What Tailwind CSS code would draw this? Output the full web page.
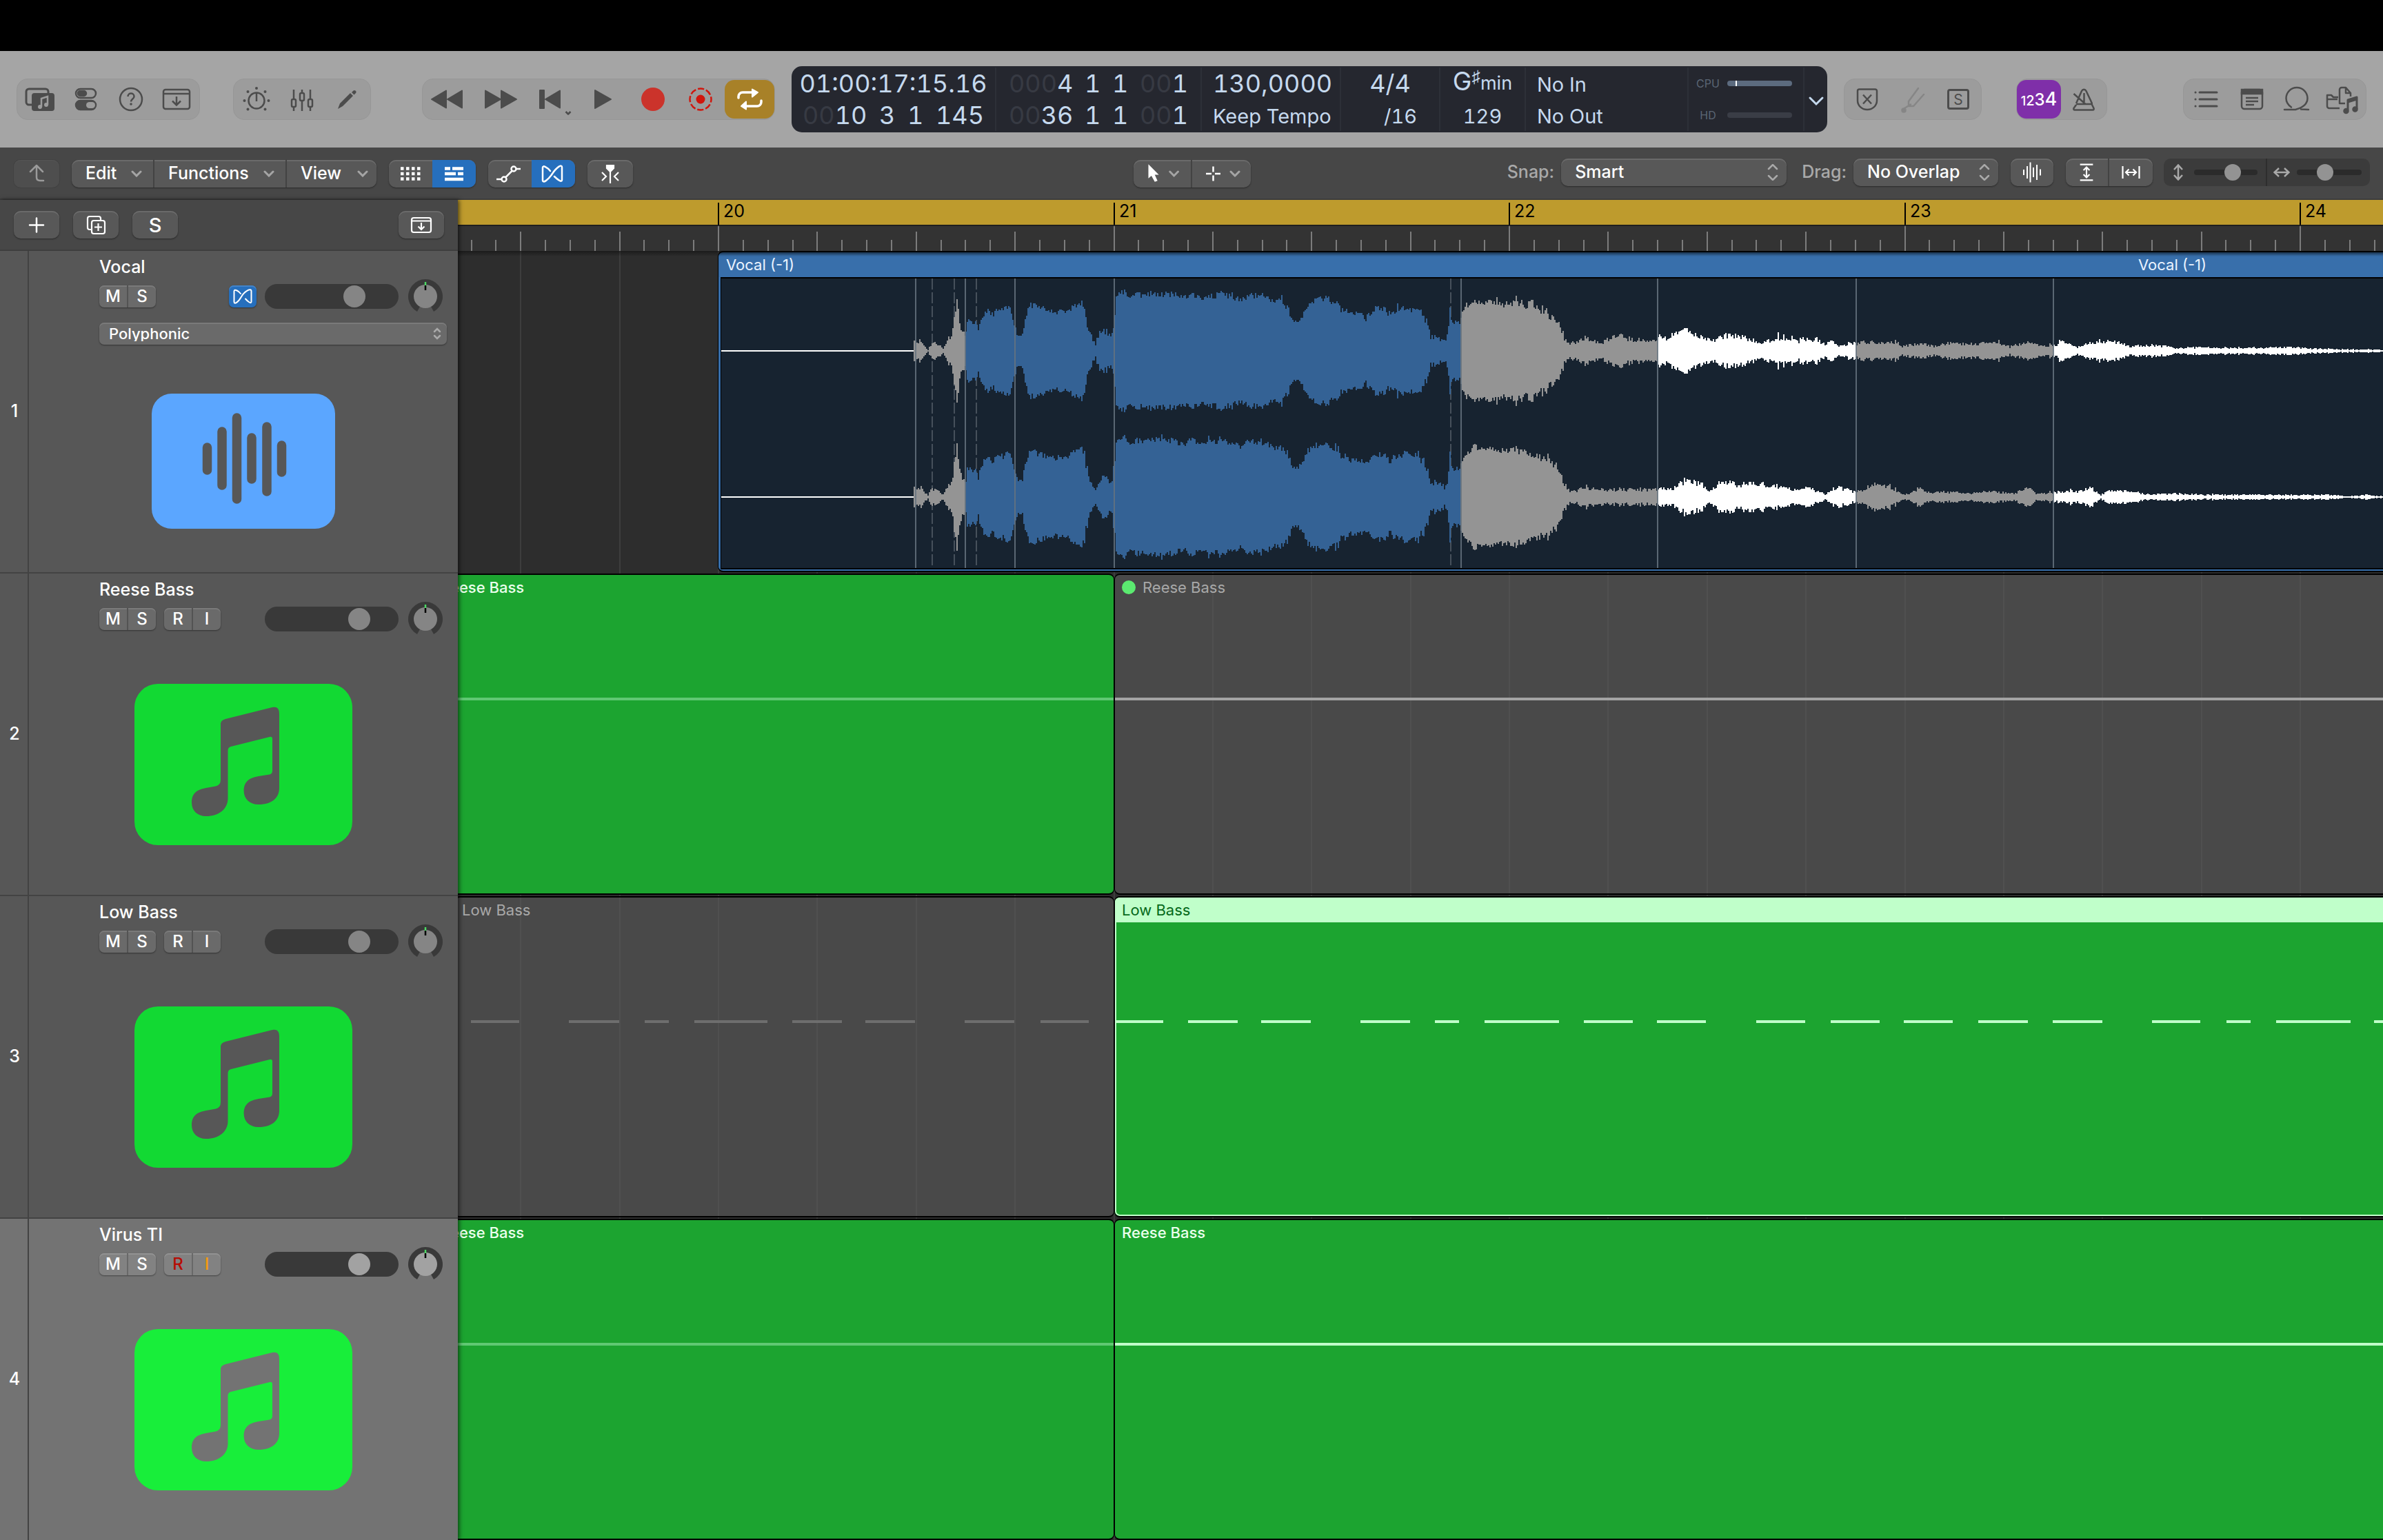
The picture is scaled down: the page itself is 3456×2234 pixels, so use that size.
<!DOCTYPE html>
<html lang="en">
<head>
  <meta charset="UTF-8">
  <meta name="viewport" content="width=device-width, initial-scale=1.0">
  <title>Tracks</title>
  <script src="https://cdn.jsdelivr.net/npm/@tailwindcss/browser@4"></script>
</head>
<body class="h-screen overflow-hidden flex flex-col bg-black font-['Inter','Liberation_Sans',sans-serif] text-[25px] text-white">

  <!-- Control bar -->
  <header class="mt-[74px] h-[140px] shrink-0 bg-[#a5a5a5] flex items-center justify-between px-6 text-[#4c4c4c]">
    <div class="flex items-center">
      <div class="flex h-[60px] rounded-[16px] bg-[#9c9c9c] border border-[#979797]">
        <button aria-label="Library" class="w-[66px]">
          <svg viewBox="0 0 66 58" class="w-full h-full" fill="none" stroke="currentColor" stroke-width="3">
            <path d="M22 37h-5a4 4 0 0 1-4-4V18a4 4 0 0 1 4-4h24a4 4 0 0 1 4 4v4"/>
            <rect x="21" y="20" width="33" height="26" rx="4" fill="currentColor" stroke="none"/>
            <path d="M35 40V28l9-3v12" stroke="#9c9c9c" stroke-width="2.5"/>
            <circle cx="33" cy="40" r="3" fill="#9c9c9c" stroke="none"/><circle cx="42" cy="37" r="3" fill="#9c9c9c" stroke="none"/>
          </svg>
        </button>
        <button aria-label="Inspector" class="w-[66px]">
          <svg viewBox="0 0 66 58" class="w-full h-full" fill="none" stroke="currentColor" stroke-width="2.5">
            <rect x="19" y="14" width="29" height="13" rx="6.5"/><rect x="22" y="17" width="12" height="7" rx="3.5" fill="currentColor"/>
            <rect x="19" y="31" width="29" height="13" rx="6.5" fill="currentColor"/><rect x="34" y="33" width="13" height="9" rx="4.5" fill="#9c9c9c" stroke="none"/>
          </svg>
        </button>
        <button aria-label="Quick Help" class="w-[66px]">
          <svg viewBox="0 0 66 58" class="w-full h-full" fill="none" stroke="currentColor" stroke-width="2.5">
            <circle cx="33" cy="29" r="16"/><path d="M28.500 25c0-6 9-6 9 0 0 3.500-4.500 3.500-4.500 7.500"/><circle cx="33" cy="36" r="1.800" fill="currentColor" stroke="none"/>
          </svg>
        </button>
        <button aria-label="Toolbar" class="w-[66px]">
          <svg viewBox="0 0 66 58" class="w-full h-full" fill="none" stroke="currentColor" stroke-width="2.5">
            <rect x="14" y="15" width="38" height="28" rx="3"/><path d="M14 21h38M33 25v12M27 31.500l6 6 6-6"/>
          </svg>
        </button>
      </div>
      <div class="ml-12 flex h-[60px] rounded-[16px] bg-[#9c9c9c] border border-[#979797]">
        <button aria-label="Smart Controls" class="w-[66px]">
          <svg viewBox="0 0 66 58" class="w-full h-full" fill="none" stroke="currentColor" stroke-width="2.5">
            <circle cx="33" cy="31" r="11.500"/><path d="M33 20v12"/>
            <g fill="currentColor" stroke="none"><circle cx="33" cy="13" r="2"/><circle cx="20.500" cy="18" r="2"/><circle cx="45.500" cy="18" r="2"/><circle cx="15.500" cy="31" r="2"/><circle cx="50.500" cy="31" r="2"/><circle cx="20.500" cy="43.500" r="2"/><circle cx="45.500" cy="43.500" r="2"/></g>
          </svg>
        </button>
        <button aria-label="Mixer" class="w-[66px]">
          <svg viewBox="0 0 66 58" class="w-full h-full" fill="none" stroke="currentColor" stroke-width="2.5">
            <path d="M21 15v14M21 41v5M33 15v4M33 31v15M45 15v14M45 41v5"/>
            <rect x="18" y="29" width="6" height="11" rx="2"/><rect x="30" y="20" width="6" height="11" rx="2"/><rect x="42" y="29" width="6" height="11" rx="2"/>
          </svg>
        </button>
        <button aria-label="Editors" class="w-[66px]">
          <svg viewBox="0 0 66 58" class="w-full h-full" fill="currentColor">
            <path d="M19 43l3-8 15-15 4 4-15 15zM39 19l2.500-2.500a2.500 2.500 0 0 1 3.500 3.500L42.500 22.500z"/>
          </svg>
        </button>
      </div>
      <div class="ml-[74px] flex h-[60px] rounded-[16px] bg-[#9c9c9c] border border-[#979797]">
        <button aria-label="Rewind" class="w-[73px]">
          <svg viewBox="0 0 73 58" class="w-full h-full" fill="currentColor" stroke="currentColor" stroke-width="2" stroke-linejoin="round"><path d="M13 29l21-12.500v25zM36 29l21-12.500v25z"/></svg>
        </button>
        <button aria-label="Forward" class="w-[73px]">
          <svg viewBox="0 0 73 58" class="w-full h-full" fill="currentColor" stroke="currentColor" stroke-width="2" stroke-linejoin="round"><path d="M18 16.500l22 12.500-22 12.500zM41 16.500l22 12.500-22 12.500z"/></svg>
        </button>
        <button aria-label="Go to Beginning" class="w-[73px]">
          <svg viewBox="0 0 73 58" class="w-full h-full" fill="currentColor" stroke="currentColor" stroke-width="2" stroke-linejoin="round"><path d="M24 16h6v26h-6zM32 29l21-12.500v25z"/><path d="M61.500 47l3.500 3.500 3.500-3.500" fill="none" stroke-width="2.500"/></svg>
        </button>
        <button aria-label="Play" class="w-[73px]">
          <svg viewBox="0 0 73 58" class="w-full h-full" fill="currentColor" stroke="currentColor" stroke-width="2" stroke-linejoin="round"><path d="M31 16l23 13-23 13z"/></svg>
        </button>
        <button aria-label="Record" class="w-[73px]">
          <svg viewBox="0 0 73 58" class="w-full h-full" fill="#cb332b"><circle cx="42" cy="29" r="17"/></svg>
        </button>
        <button aria-label="Capture Recording" class="w-[73px]">
          <svg viewBox="0 0 73 58" class="w-full h-full" fill="#d0160d"><circle cx="38" cy="29" r="6.500"/><circle cx="38" cy="29" r="15.500" fill="none" stroke="#d0160d" stroke-width="2.500" stroke-dasharray="9.200 3" stroke-dashoffset="4.600"/></svg>
        </button>
        <button aria-label="Cycle" class="w-[72px] my-px rounded-[14px] bg-[#a88128] text-white">
          <svg viewBox="0 0 72 56" class="w-full h-full" fill="none" stroke="currentColor" stroke-width="3.500" stroke-linecap="round"><path d="M20 26v-2a6 6 0 0 1 6-6h15M53 30v2a6 6 0 0 1-6 6H32"/><path d="M40 13.500l8 4.500-8 6.500zM31 31.500L24 38l7 4.500z" fill="currentColor" stroke-width="2" stroke-linejoin="round"/></svg>
        </button>
      </div>
    </div>

    <!-- LCD -->
    <div class="h-24 rounded-[15px] bg-[#25272f] text-[#c5d9ee] flex items-stretch py-0.5 tabular-nums">
      <div class="w-[297px] px-4 flex flex-col text-[36px] leading-[46px] border-r-2 border-[#2d3038]">
        <div class="flex justify-center whitespace-nowrap">01:00:17:15.16</div>
        <div class="flex justify-between"><span><span class="text-[#373a43]">00</span>10</span><span>3</span><span>1</span><span>145</span></div>
      </div>
      <div class="w-[298px] px-[18px] flex flex-col text-[36px] leading-[46px] border-r-2 border-[#2d3038]">
        <div class="flex justify-between"><span><span class="text-[#373a43]">000</span>4</span><span>1</span><span>1</span><span><span class="text-[#373a43]">00</span>1</span></div>
        <div class="flex justify-between"><span><span class="text-[#373a43]">00</span>36</span><span>1</span><span>1</span><span><span class="text-[#373a43]">00</span>1</span></div>
      </div>
      <div class="w-[202px] px-4 flex flex-col leading-[46px] border-r-2 border-[#2d3038] whitespace-nowrap">
        <div class="text-[36px]">130,0000</div><div class="text-[29px] pt-0.5">Keep Tempo</div>
      </div>
      <div class="w-[144px] px-8 flex flex-col leading-[46px] border-r-2 border-[#2d3038]">
        <div class="text-[36px] text-center">4/4</div><div class="text-[29px] text-right pt-0.5">/16</div>
      </div>
      <div class="w-[124px] flex flex-col leading-[46px] text-center border-r-2 border-[#2d3038]">
        <div class="h-[46px] flex items-start justify-center text-[37px] leading-[40px]">G<span class="text-[25px] leading-[26px]">♯</span><span class="text-[27px] leading-[46px]">min</span></div><div class="text-[29px] pt-0.5">129</div>
      </div>
      <div class="w-[236px] px-4 pt-0.5 flex flex-col text-[29px] leading-[46px] border-r-2 border-[#2d3038]">
        <div>No In</div><div>No Out</div>
      </div>
      <div class="w-[168px] pl-2 pr-4 flex flex-col text-[16px] leading-[46px] text-[#5b6675] border-r-2 border-[#2d3038]">
        <div class="flex items-center justify-between"><span class="w-10 text-center">CPU</span><span class="w-[94px] h-2 rounded-full bg-[#5c6b7f] flex"><span class="ml-3 w-0.5 bg-white"></span></span></div>
        <div class="flex items-center justify-between"><span class="w-10 text-center">HD</span><span class="w-[94px] h-2 rounded-full bg-[#3a3d46]"></span></div>
      </div>
      <button aria-label="Display Mode" class="w-[33px]">
        <svg viewBox="0 0 33 92" class="w-full h-full" fill="none" stroke="currentColor" stroke-width="3" stroke-linecap="round"><path d="M8 44l9 9 9-9"/></svg>
      </button>
    </div>

    <div class="flex items-center">
      <div class="flex h-[60px] rounded-[16px] bg-[#9c9c9c] border border-[#979797]">
        <button aria-label="Replace" class="w-[66px]">
          <svg viewBox="0 0 66 58" class="w-full h-full" fill="none" stroke="currentColor" stroke-width="2.500"><path d="M19 17a2.500 2.500 0 0 1 2.500-2.500h23A2.500 2.500 0 0 1 47 17v14c0 7-6 13-14 13s-14-6-14-13z"/><path d="M27 22.500l12 13M39 22.500l-12 13"/></svg>
        </button>
        <button aria-label="Tuner" class="w-[66px] text-[#868686]">
          <svg viewBox="0 0 66 58" class="w-full h-full" fill="none" stroke="currentColor" stroke-width="2.500" stroke-linecap="round" stroke-linejoin="round"><path d="M41 13L27 32v7h7l15-17M30 36.500L21 42v3"/><circle cx="20" cy="45" r="2.500" fill="currentColor"/></svg>
        </button>
        <button aria-label="Solo" class="w-[66px] flex items-center justify-center">
          <span class="w-8 h-[30px] rounded-[4px] border-[3px] border-current flex items-center justify-center text-[21px] leading-none">S</span>
        </button>
      </div>
      <div class="ml-[50px] flex h-[60px] rounded-[16px] bg-[#9c9c9c] border border-[#979797]">
        <button aria-label="Count In" class="w-16 my-px rounded-[14px] bg-[#7f2fa9] text-white flex items-baseline justify-center pt-3 leading-8 font-medium"><span class="text-[18px]">1</span><span class="text-[20px]">2</span><span class="text-[24px]">3</span><span class="text-[27px]">4</span></button>
        <button aria-label="Metronome" class="w-[66px]">
          <svg viewBox="0 0 66 58" class="w-full h-full" fill="none" stroke="currentColor" stroke-width="2.500" stroke-linejoin="round"><path d="M22 35l8-18c1.500-3 5-3 6.500 0l8.500 18M22 37l-3.500 5c-.5 1.500 0 2.500 1.500 2.500h26c1.500 0 2-1 1.500-2.500L45 37M22 36h24M18.500 21l17 15M33.500 20v13"/></svg>
        </button>
      </div>
      <div class="ml-[110px] flex h-[60px] rounded-[16px] bg-[#9c9c9c] border border-[#979797]">
        <button aria-label="List Editors" class="w-[66px]">
          <svg viewBox="0 0 66 58" class="w-full h-full" fill="none" stroke="currentColor" stroke-width="3" stroke-linecap="round"><path d="M23 19h25M23 29h25M23 39h25M17 19h.1M17 29h.1M17 39h.1"/></svg>
        </button>
        <button aria-label="Note Pad" class="w-[66px]">
          <svg viewBox="0 0 66 58" class="w-full h-full" fill="none" stroke="currentColor" stroke-width="2.500"><rect x="18" y="15" width="30" height="28" rx="4"/><path d="M18 15h30v6H18z" fill="currentColor"/><path d="M24 27h18M24 32h18M24 37h12"/></svg>
        </button>
        <button aria-label="Loop Browser" class="w-[66px]">
          <svg viewBox="0 0 66 58" class="w-full h-full" fill="none" stroke="currentColor" stroke-width="2.500" stroke-linecap="round"><path d="M14 44H30C41 41 47.500 35 47.500 27.500A15.500 15.500 0 0 0 16.500 27.500C16.500 33 19 37 24 40.500M38 43.500L49 44"/></svg>
        </button>
        <button aria-label="Browsers" class="w-[66px]">
          <svg viewBox="0 0 66 58" class="w-full h-full" fill="none" stroke="currentColor" stroke-width="2.500" stroke-linejoin="round"><path d="M28 42H13a3 3 0 0 1-3-3V23h6l3 3h7M10 29h15"/><path d="M36 35h-8V15a3 3 0 0 1 3-3h6l7 8v5M37 12v8h7"/><path d="M40 45V30l13-4v17M40 33l13-4" stroke-width="3"/><circle cx="37.500" cy="46" r="3" fill="currentColor"/><circle cx="50.500" cy="43.500" r="3" fill="currentColor"/></svg>
        </button>
      </div>
    </div>
  </header>

  <!-- Tracks area menu bar -->
  <nav class="h-[76px] shrink-0 bg-[#474747] border-b-2 border-[#3d3d3d] flex items-center pl-5 pr-[19px] font-medium">
    <div class="flex-1 flex items-center pt-0.5">
      <button aria-label="Up" class="w-[66px] h-10 rounded-[10px] bg-[#4e4e4e] shadow-[inset_0_1px_0_#555,0_0_0_1px_#424242]">
        <svg viewBox="0 0 66 40" class="w-full h-full" fill="none" stroke="#9a9a9a" stroke-width="2.500" stroke-linecap="round" stroke-linejoin="round"><path d="M24 17l9-9 9 9M33 8v17c0 4 2 5 5 5h5"/></svg>
      </button>
      <div class="ml-[18px] flex h-10 rounded-[10px] bg-[#585858] shadow-[inset_0_2px_0_#6a6a6a,0_1px_2px_#2a2a2a] divide-x-2 divide-[#434343]">
        <button class="w-[120px] pl-5 pr-4 flex items-center justify-between">Edit<svg viewBox="0 0 16 10" class="w-4 h-2.5 shrink-0" fill="none" stroke="#a5a5a5" stroke-width="3" stroke-linecap="round"><path d="M2 2l6 6 6-6"/></svg></button>
        <button class="w-[192px] pl-5 pr-4 flex items-center justify-between">Functions<svg viewBox="0 0 16 10" class="w-4 h-2.5 shrink-0" fill="none" stroke="#a5a5a5" stroke-width="3" stroke-linecap="round"><path d="M2 2l6 6 6-6"/></svg></button>
        <button class="w-[130px] pl-5 pr-3 flex items-center justify-between">View<svg viewBox="0 0 16 10" class="w-4 h-2.5 shrink-0" fill="none" stroke="#a5a5a5" stroke-width="3" stroke-linecap="round"><path d="M2 2l6 6 6-6"/></svg></button>
      </div>
      <div class="ml-[18px] flex h-10 rounded-[10px] overflow-hidden bg-[#585858] shadow-[inset_0_2px_0_#6a6a6a,0_1px_2px_#2a2a2a]">
        <button aria-label="Live Loops Grid" class="w-[63px]">
          <svg viewBox="0 0 63 40" class="w-full h-full" fill="none" stroke="#fff" stroke-width="4.500" stroke-dasharray="4.500 3.500"><path d="M17 12.500h29M17 20h29M17 27.500h29"/></svg>
        </button>
        <button aria-label="Tracks View" class="w-[63px] bg-[#266fbd]">
          <svg viewBox="0 0 63 40" class="w-full h-full" fill="none" stroke="#fff" stroke-width="4.500"><path d="M18 12.500h8M29 12.500h16M18 20h16M37 20h8M18 28h27"/></svg>
        </button>
      </div>
      <div class="ml-[18px] flex h-10 rounded-[10px] overflow-hidden bg-[#585858] shadow-[inset_0_2px_0_#6a6a6a,0_1px_2px_#2a2a2a]">
        <button aria-label="Automation" class="w-[63px]">
          <svg viewBox="0 0 63 40" class="w-full h-full" fill="none" stroke="#fff" stroke-width="2.500"><path d="M12 28h7M25 25.500l10-10M40 13h7"/><circle cx="23" cy="28" r="3.500"/><circle cx="37" cy="13" r="3.500"/></svg>
        </button>
        <button aria-label="Flex" class="w-[63px] bg-[#266fbd]">
          <svg viewBox="0 0 63 40" class="w-full h-full" fill="none" stroke="#fff" stroke-width="2.500" stroke-linecap="round"><path d="M27 16c-4-5-11-9-11-5v18c0 6 8 0 14-9S44 5 44 11v18c0 4-6 0-11-5"/></svg>
        </button>
      </div>
      <button aria-label="Catch Playhead" class="ml-[18px] w-[66px] h-10 rounded-[10px] bg-[#585858] shadow-[inset_0_2px_0_#6a6a6a,0_1px_2px_#2a2a2a]">
        <svg viewBox="0 0 66 40" class="w-full h-full" fill="none" stroke="#fff" stroke-width="2.200"><path d="M33 12v22M21 18l6 6-6 6M45 18l-6 6 6 6"/><path d="M28 8h10v4l-5 5-5-5z" fill="#fff"/></svg>
      </button>
    </div>

    <div class="flex h-10 rounded-[10px] bg-[#585858] shadow-[inset_0_2px_0_#6a6a6a,0_1px_2px_#2a2a2a] divide-x-2 divide-[#434343] mt-0.5">
      <button aria-label="Pointer Tool" class="w-[85px]">
        <svg viewBox="0 0 85 40" class="w-full h-full" fill="#fff"><path d="M22 6v21l4.500-4 5 9 4-1.500-4-9h6z"/><path d="M54 17l6 6 6-6" fill="none" stroke="#a5a5a5" stroke-width="3" stroke-linecap="round"/></svg>
      </button>
      <button aria-label="Marquee Tool" class="w-[85px]">
        <svg viewBox="0 0 85 40" class="w-full h-full" fill="none" stroke="#fff" stroke-width="2.500"><path d="M20 20h8M33 20h8M30.500 9.500v8M30.500 22.500v8"/><path d="M56 17l6 6 6-6" stroke="#a5a5a5" stroke-width="3" stroke-linecap="round"/></svg>
      </button>
    </div>

    <div class="flex-1 flex items-center justify-end pb-0.5 text-[#a9a9a9]">
      <label for="snap">Snap:</label>
      <div class="relative ml-[10px]">
        <select id="snap" class="block appearance-none w-[327px] h-10 px-5 rounded-[10px] bg-[#585858] text-white shadow-[inset_0_2px_0_#6a6a6a,0_1px_2px_#2a2a2a]"><option>Smart</option></select>
        <svg viewBox="0 0 16 24" class="absolute right-3 top-2 w-4 h-6 pointer-events-none" fill="none" stroke="currentColor" stroke-width="2.500" stroke-linecap="round"><path d="M2 7l6-6 6 6M2 17l6 6 6-6"/></svg>
      </div>
      <label for="drag" class="ml-[22px]">Drag:</label>
      <div class="relative ml-[10px]">
        <select id="drag" class="block appearance-none w-[210px] h-10 px-5 rounded-[10px] bg-[#585858] text-white shadow-[inset_0_2px_0_#6a6a6a,0_1px_2px_#2a2a2a]"><option>No Overlap</option></select>
        <svg viewBox="0 0 16 24" class="absolute right-3 top-2 w-4 h-6 pointer-events-none" fill="none" stroke="currentColor" stroke-width="2.500" stroke-linecap="round"><path d="M2 7l6-6 6 6M2 17l6 6 6-6"/></svg>
      </div>
      <button aria-label="Waveform Zoom" class="ml-[18px] w-[62px] h-10 rounded-[10px] bg-[#585858] shadow-[inset_0_2px_0_#6a6a6a,0_1px_2px_#2a2a2a]">
        <svg viewBox="0 0 62 40" class="w-full h-full" stroke="#fff" stroke-width="2"><path d="M19 16v8M24 11v18M28.500 5.500v29M33 13v14M38 9v22M43 15.500v9"/></svg>
      </button>
      <div class="ml-[18px] flex h-10 rounded-[10px] bg-[#585858] shadow-[inset_0_2px_0_#6a6a6a,0_1px_2px_#2a2a2a] divide-x-2 divide-[#434343]">
        <button aria-label="Vertical Auto Zoom" class="w-[63px]">
          <svg viewBox="0 0 62 40" class="w-full h-full" fill="none" stroke="#fff" stroke-width="2.200"><path d="M21 8.500h19M21 31.500h19M30.500 13v14M26 17l4.500-4.500L35 17M26 23l4.500 4.500L35 23"/></svg>
        </button>
        <button aria-label="Horizontal Auto Zoom" class="w-[63px]">
          <svg viewBox="0 0 62 40" class="w-full h-full" fill="none" stroke="#fff" stroke-width="2.200"><path d="M19 11v18M43 11v18M23.500 20h15M28 15.500L23.500 20l4.500 4.500M34 15.500l4.500 4.500-4.500 4.500"/></svg>
        </button>
      </div>
      <div class="ml-4 flex items-center h-10 rounded-[10px] bg-[#3b3b3b] divide-x-2 divide-[#2e2e2e]">
        <div class="w-[150px] h-10 pl-[13px] flex items-center gap-[15px]">
          <svg viewBox="0 0 16 24" class="w-4 h-6 shrink-0" fill="none" stroke="currentColor" stroke-width="2.500"><path d="M8 2v20M2 8l6-6.500L14 8M2 16l6 6.500 6-6.500"/></svg>
          <input type="range" aria-label="Vertical Zoom" min="0" max="100" value="64" class="appearance-none w-[92px] h-2 rounded-full bg-[#2b2b2b] [&::-webkit-slider-thumb]:appearance-none [&::-webkit-slider-thumb]:size-6 [&::-webkit-slider-thumb]:rounded-full [&::-webkit-slider-thumb]:bg-[#939393]">
        </div>
        <div class="w-[149px] h-10 pl-[9px] flex items-center gap-[10px]">
          <svg viewBox="0 0 24 16" class="w-6 h-4 shrink-0" fill="none" stroke="currentColor" stroke-width="2.500"><path d="M2 8h20M8 2L1.500 8 8 14M16 2l6.500 6L16 14"/></svg>
          <input type="range" aria-label="Horizontal Zoom" min="0" max="100" value="42" class="appearance-none w-[94px] h-2 rounded-full bg-[#2b2b2b] [&::-webkit-slider-thumb]:appearance-none [&::-webkit-slider-thumb]:size-6 [&::-webkit-slider-thumb]:rounded-full [&::-webkit-slider-thumb]:bg-[#939393]">
        </div>
      </div>
    </div>
  </nav>

  <main class="flex-1 min-h-0 flex bg-[#2d2d2d]">
    <!-- Track headers -->
    <aside class="w-[664px] shrink-0 z-10 flex flex-col bg-[#575757] shadow-[2px_0_6px_#0009]">
      <div class="h-[74px] shrink-0 px-5 bg-[#474747] border-b-2 border-[#3e3e3e] flex items-center gap-5">
        <button aria-label="Add Track" class="w-[66px] h-10 rounded-[10px] bg-[#585858] shadow-[inset_0_2px_0_#6a6a6a,0_1px_2px_#2a2a2a]">
          <svg viewBox="0 0 66 40" class="w-full h-full" stroke="#fff" stroke-width="2.500" stroke-linecap="round"><path d="M23 20.500h20M33 10.500v20"/></svg>
        </button>
        <button aria-label="Duplicate Track" class="w-[66px] h-10 rounded-[10px] bg-[#585858] shadow-[inset_0_2px_0_#6a6a6a,0_1px_2px_#2a2a2a]">
          <svg viewBox="0 0 66 40" class="w-full h-full" fill="none" stroke="#fff" stroke-width="2.200"><path d="M27 27h-3a3 3 0 0 1-3-3V11a3 3 0 0 1 3-3h13a3 3 0 0 1 3 3v3"/><rect x="27" y="14" width="19" height="19" rx="3"/><path d="M36.500 18v11M31 23.500h11"/></svg>
        </button>
        <button class="w-[66px] h-10 rounded-[10px] bg-[#585858] text-[29px] leading-none font-medium shadow-[inset_0_2px_0_#6a6a6a,0_1px_2px_#2a2a2a]">S</button>
        <button aria-label="Global Tracks" class="ml-auto w-[66px] h-10 rounded-[10px] bg-[#585858] shadow-[inset_0_2px_0_#6a6a6a,0_1px_2px_#2a2a2a]">
          <svg viewBox="0 0 66 40" class="w-full h-full" fill="none" stroke="#fff" stroke-width="2.200"><rect x="19" y="10" width="28" height="21" rx="3"/><path d="M19 14.500h28M33 17v10M28.500 22.500L33 27l4.500-4.500"/></svg>
        </button>
      </div>
      <div id="tracks" class="flex flex-col"></div>
    </aside>

    <!-- Timeline -->
    <section class="flex-1 min-w-0 overflow-hidden">
      <div id="ruler" class="relative h-[74px] bg-[#333]"></div>
      <div id="lanes" class="relative"></div>
    </section>
  </main>

<script>
  // Timeline geometry, in pixels from the left edge of the timeline
  const ORIGIN = 664, BAR = 573.5, BAR20 = 1042;
  const beats = [];
  for (let i = -2; i < 18; i++) beats.push(Math.round(BAR20 + i * BAR / 4) - ORIGIN);

  const AUDIO_ICON = `
    <svg viewBox="0 0 266 196" class="w-[266px] h-[196px]" role="img" aria-label="Audio track">
      <rect width="266" height="196" rx="29" fill="#5ba6ff"/>
      <g fill="none" stroke="currentColor" stroke-width="13.500" stroke-linecap="round">
        <path d="M80.500 78v33M102 55v78M123.500 35v118M145 64v60M167 48v94M188.500 75v39"/>
      </g>
    </svg>`;
  const NOTE_ICON = fill => `
    <svg viewBox="0 0 316 234" class="w-[316px] h-[234px]" role="img" aria-label="Software instrument track">
      <rect width="316" height="234" rx="34" fill="${fill}"/>
      <path fill="currentColor" d="M125 58Q125 53 132 51L200 34Q210 32 210 43V151C210 165 200 175 180 175 167 175 158.600 167 158.600 155 158.600 141 168 136 180 134L196 131.500Q200 130.500 200 126V80Q200 76 196 77L140 91Q135.500 92 135.500 97V166C135.500 182 122 192 104 192 91 192 83 184 83 172 83 158 92 153 104 151L118 148.500Q125 147 125 139Z"/>
    </svg>`;

  const tracks = [
    { name: 'Vocal', audio: true, volume: 71 },
    { name: 'Reese Bass', volume: 75 },
    { name: 'Low Bass', volume: 75 },
    { name: 'Virus TI', volume: 75, selected: true },
  ];

  document.getElementById('tracks').innerHTML = tracks.map((t, i) => {
    const pair = t.selected
      ? 'flex w-[82px] h-8 rounded-[7px] bg-[#828282] shadow-[inset_0_2px_0_#929292,0_1px_2px_#444] divide-x-2 divide-[#686868]'
      : 'flex w-[82px] h-8 rounded-[7px] bg-[#6a6a6a] shadow-[inset_0_2px_0_#7a7a7a,0_1px_2px_#333] divide-x-2 divide-[#535353]';
    return `
    <div class="h-[468px] shrink-0 flex border-b-2 border-[#434343] ${t.selected ? 'bg-[#737373] text-[#737373]' : 'bg-[#575757] text-[#575757]'}">
      <div class="w-[42px] shrink-0 pl-0.5 border-r-2 border-[#434343] flex items-center justify-center text-white font-medium">${i + 1}</div>
      <div class="flex-1 flex flex-col pt-[7px]">
        <div class="pl-[102px] pr-4 text-white font-medium">
          <h2 class="leading-8">${t.name}</h2>
          <div class="flex items-center h-[54px] text-[24px] leading-none">
            <div class="${pair}"><button class="flex-1">M</button><button class="flex-1">S</button></div>
            ${t.audio ? `
            <button aria-label="Flex" class="ml-[106px] w-10 h-8 rounded-[7px] bg-[#266fbd] shadow-[inset_0_2px_0_#4384c8,0_1px_2px_#333]">
              <svg viewBox="0 0 40 32" class="w-full h-full" fill="none" stroke="#fff" stroke-width="2" stroke-linecap="round"><path d="M17 12C14 8 7.500 4.500 7.500 8.500v15c0 5 6 1 10.500-7S32.500 3 32.500 8.500v15c0 4-5 0-8.500-4"/></svg>
            </button>` : `
            <div class="ml-3 ${pair}"><button class="flex-1 ${t.selected ? 'text-[#b70c05]' : ''}">R</button><button class="flex-1 ${t.selected ? 'text-[#f49a0c]' : ''}">I</button></div>`}
            <input type="range" aria-label="${t.name} volume" min="0" max="100" value="${t.volume}" class="${t.audio ? 'ml-3' : 'ml-16'} appearance-none w-[194px] h-9 px-0.5 rounded-full bg-[#393939] [&::-webkit-slider-thumb]:appearance-none [&::-webkit-slider-thumb]:size-8 [&::-webkit-slider-thumb]:rounded-full ${t.selected ? '[&::-webkit-slider-thumb]:bg-[#a2a2a2]' : '[&::-webkit-slider-thumb]:bg-[#858585]'}">
            <svg viewBox="0 0 50 50" class="ml-[14px] w-[50px] h-[50px]" role="img" aria-label="Pan">
              <path d="M13 47A25 25 0 1 1 37 47L25 25z" fill="#393939"/>
              <circle cx="25" cy="25" r="17" fill="${t.selected ? '#a2a2a2' : '#858585'}"/>
              <path d="M25 4v5" stroke="#4cd964" stroke-width="2.500"/><path d="M25 9v7" stroke="#000" stroke-width="2.500"/>
            </svg>
          </div>
          ${t.audio ? `
          <div class="relative mt-[11px]">
            <select aria-label="Flex mode" class="block appearance-none w-full h-8 px-[14px] rounded-[7px] bg-[#6a6a6a] text-[22px] leading-none shadow-[inset_0_2px_0_#7a7a7a,0_1px_2px_#333]"><option>Polyphonic</option></select>
            <svg viewBox="0 0 12 18" class="absolute right-2 top-[7px] w-3 h-[18px] pointer-events-none" fill="none" stroke="#a9a9a9" stroke-width="2.500" stroke-linecap="round"><path d="M2 6l4-4 4 4M2 12l4 4 4-4"/></svg>
          </div>` : ''}
        </div>
        <div class="flex justify-center ${t.audio ? 'mt-[71px]' : 'mt-[67px]'}">${t.audio ? AUDIO_ICON : NOTE_ICON(t.selected ? '#18ee3a' : '#12d933')}</div>
      </div>
    </div>`;
  }).join('');

  // Ruler: cycle strip on top, ticks for sixteenths and beats below
  let ticks = '';
  for (let i = -11; i < 70; i++) {
    const x = Math.round(BAR20 + i * BAR / 16) - ORIGIN - 1;
    const top = i % 16 === 0 ? 38 : i % 4 === 0 ? 46 : 58;
    ticks += `<rect x="${x}" y="${top}" width="2" height="${74 - top}" fill="#7c7c7c"/>`;
  }
  let bars = '', numbers = '';
  for (let n = 0; n < 5; n++) {
    const x = Math.round(BAR20 + n * BAR) - ORIGIN;
    bars += `<rect x="${x - 1}" y="4" width="2" height="32" fill="#000"/>`;
    numbers += `<span class="absolute top-0 leading-8 text-[25px] text-black" style="left:${x + 7}px">${20 + n}</span>`;
  }
  document.getElementById('ruler').innerHTML = `
    <svg class="w-full h-full" shape-rendering="crispEdges">
      <rect width="100%" height="36" fill="#be9b2d"/><rect y="36" width="100%" height="2" fill="#1f1f1f"/>
      ${ticks}${bars}
    </svg>${numbers}`;

  // Waveform envelopes: [x, half height]
  const head = [[1325,19],[1328,13],[1334,15],[1341,6],[1345,2],[1351,12],[1361,9],[1367,3],[1373,16],[1380,25],[1384,54],[1387,76],[1391,40],[1396,24],[1400,24],
    [1401,47],[1408,39],[1413,43],[1418,28],[1424,49],[1430,59],[1437,52],[1443,57],[1456,60],[1464,63],[1469,46],[1472,31],[1477,21],[1482,25],[1485,43],[1490,61],[1494,66],[1507,63],[1526,57],[1545,57],[1558,66],[1568,70],[1572,63],[1575,36],[1579,27],[1588,10],[1592,22],[1597,27],[1604,28],[1611,20],[1615,42],
    [1618,76],[1624,86],[1632,86],[1638,73],[1646,81],[1670,83],[1702,81],[1715,77],[1727,83],[1737,77],[1753,78],[1769,83],[1785,79],[1799,72],[1810,80],[1836,80],[1845,72],[1858,72],[1865,64],[1871,51],[1877,40],[1882,43],[1889,52],[1895,66],[1903,73],[1914,77],[1925,78],[1932,70],[1941,71],[1944,57],[1950,61],[1957,52],[1970,54],[1980,47],[1989,54],[1995,62],[2008,61],[2014,52],[2024,59],[2037,63],[2046,59],[2056,62],[2061,56],[2066,44],[2071,36],[2073,21],[2081,21],[2095,14],[2099,26],[2102,62],[2105,41],[2117,41],
    [2119,55],[2129,67],[2139,73],[2148,69],[2161,72],[2177,67],[2199,70],[2212,64],[2228,60],[2244,52],[2257,42],[2263,32],[2268,19]];
  const left = head.concat([[2273,11],[2286,12],[2297,19],[2308,15],[2324,12],[2333,19],[2352,23],[2365,16],[2388,14],[2403,16],
    [2405,24],[2416,19],[2429,24],[2443,30],[2455,25],[2464,21],[2477,16],[2490,16],[2502,23],[2518,21],[2531,18],[2550,11],[2569,16],[2585,20],[2606,16],[2634,17],[2643,9],[2657,14],[2667,6],[2680,11],[2691,11],
    [2714,14],[2731,10],[2749,14],[2757,7],[2789,10],[2806,7],[2823,11],[2857,10],[2897,11],[2914,6],[2940,12],[2960,8],[2977,7],[2982,9],[2990,13],[3011,5],[3034,12],[3069,13],[3086,7],[3120,8],[3154,4],[3203,5],[3245,4],[3331,5],[3360,3],[3417,2],[3456,2]]);
  const right = head.concat([[2276,7],[2286,9],[2300,15],[2308,11],[2340,11],[2403,11],[2423,12],[2435,18],[2448,25],[2464,19],[2477,8],[2493,18],[2509,23],[2521,15],[2544,20],[2566,17],[2589,14],[2600,9],[2620,14],[2646,4],[2664,15],[2674,11],[2691,8],
    [2700,10],[2717,18],[2743,13],[2757,4],[2768,5],[2785,14],[2794,7],[2823,7],[2851,5],[2886,8],[2920,5],[2940,14],[2951,5],[2977,6],[2994,8],[3017,8],[3031,13],[3045,3],[3057,8],[3080,9],[3103,6],[3120,3],[3151,5],[3171,4],[3217,3],[3291,3],[3377,3],[3400,1],[3428,3],[3456,1]]);
  const segments = [[1325, 1400, '#949494'], [1400, 2118, '#346295'], [2118, 2404, '#949494'], [2404, 2692, '#fff'], [2692, 2978, '#949494'], [2978, 3456, '#fff']];
  const W0 = 1042;

  function wave(env, cy, seed) {
    let s = seed, k = 0, out = '';
    const rnd = () => (s = (s * 16807) % 2147483647) / 2147483647;
    for (const [from, to, color] of segments) {
      let d = '';
      for (let x = from; x < to; x += 2) {
        while (k < env.length - 2 && env[k + 1][0] <= x) k++;
        const [x0, a0] = env[k], [x1, a1] = env[k + 1];
        let a = a0 + (a1 - a0) * Math.min(1, Math.max(0, (x - x0) / (x1 - x0)));
        const spread = Math.min(9, 1 + a * 0.4);
        a += (rnd() - 0.5) * spread;
        if (x > 1500 && rnd() > 0.88) a += (rnd() - 0.35) * Math.min(14, a * 0.5);
        if (x > 2215 && x < 2262 && rnd() > 0.6) a += 8;
        a = Math.max(1, Math.round(a));
        d += `M${x - W0} ${cy - a}h2v${2 * a}h-2z`;
      }
      out += `<path d="${d}" fill="${color}"/>`;
    }
    return out;
  }

  const solid = [1327, 1399, 1471, 1615, 2118, 2403, 2691, 2977].map(x => `<rect x="${x - W0}" y="40" width="2" height="420" fill="#66737f" opacity=".85"/>`).join('');
  const dashed = [1352, 1384, 1416, 2104].map(x => `<path d="M${x - W0} 40v420" stroke="#46505b" stroke-width="2" stroke-dasharray="16 4"/>`).join('');
  const vocal = `
    <div class="absolute top-0 h-[466px] left-[377px] right-0 rounded-l-[8px] border-y-2 border-l border-black bg-[#386fab] overflow-hidden">
      <div class="h-9 leading-9 pl-[11px] text-[22px] text-[#eaf3ff] shadow-[inset_0_5px_4px_-3px_#0006]">Vocal (-1)</div>
      <span class="absolute top-0 left-[2059px] leading-9 text-[22px] text-[#eaf3ff]">Vocal (-1)</span>
      <div class="ml-[3px] h-[424px] border-y-2 border-l border-black bg-[#172330]"></div>
      <svg class="absolute -top-0.5 left-0 w-full h-[466px]" shape-rendering="crispEdges">
        <rect x="4" y="144" width="280" height="2" fill="#fff"/><rect x="4" y="356" width="280" height="2" fill="#fff"/>
        ${dashed}${wave(left, 145, 11)}${wave(right, 357, 77)}${solid}
      </svg>
    </div>`;

  // MIDI regions
  function region(from, to, label, kind, notes, noteColor) {
    const look = {
      green: 'bg-[#1ca430] text-[#eaffec] font-medium',
      muted: 'bg-[#494949] text-[#a8a8a8]',
      selected: 'bg-[#1ca430] text-[#05691a]',
    }[kind];
    const grid = kind === 'muted' ? beats.filter(b => b > from && b < to).map(b => `<rect x="${b - from - 2}" y="0" width="2" height="462" fill="#505050"/>`).join('') : '';
    const lines = notes.map(([a, b]) => `<rect x="${a - ORIGIN - from - 1}" y="178" width="${b - a}" height="4" fill="${noteColor}"/>`).join('');
    return `
    <div class="absolute top-0 h-[466px] rounded-[8px] border-y-2 border-x border-black overflow-hidden ${look}" style="left:${from}px;width:${to - from}px">
      <svg class="absolute inset-0 w-full h-full" shape-rendering="crispEdges">${grid}${lines}</svg>
      ${kind === 'selected' ? '<div class="absolute inset-0 rounded-[7px] border-2 border-[#c0ffca]"></div>' : ''}
      <div class="relative h-9 px-[10px] text-[22px] leading-9 whitespace-nowrap ${kind === 'selected' ? 'bg-[#c0ffca]' : ''}">${label}</div>
    </div>`;
  }
  const SPLIT = 952, END = 2860;
  const dot = '<span class="inline-block size-5 mr-[10px] rounded-full bg-[#5bea70] align-[-2px]"></span>';
  const lowLeft = [[683,753],[825,898],[935,970],[1007,1113],[1149,1221],[1255,1327],[1399,1471],[1509,1579]];
  const lowRight = [[1617,1687],[1723,1795],[1829,1901],[1973,2045],[2081,2116],[2153,2261],[2297,2368],[2403,2474],[2547,2618],[2655,2726],[2761,2832],[2869,2941],[2977,3049],[3121,3191],[3229,3264],[3301,3409],[3443,3520]];
  const lanes = [
    vocal,
    region(-36, SPLIT, 'Reese Bass', 'green', [[600, 1616]], '#60c873') + region(SPLIT, END, dot + 'Reese Bass', 'muted', [[1616, 3500]], '#a4a4a4'),
    region(-5, SPLIT, 'Low Bass', 'muted', lowLeft, '#6e6e6e') + region(SPLIT, END, 'Low Bass', 'selected', lowRight, '#c0ffca'),
    region(-36, SPLIT, 'Reese Bass', 'green', [[600, 1616]], '#60c873') + region(SPLIT, END, 'Reese Bass', 'green', [[1616, 3500]], '#c0ffca'),
  ];
  document.getElementById('lanes').innerHTML = `
    <svg class="absolute inset-0 w-full h-full" shape-rendering="crispEdges">
      ${beats.map(b => `<rect x="${b - 1}" width="2" height="100%" fill="#3d3d3d"/>`).join('')}
    </svg>
    ${lanes.map(l => `<div class="relative h-[468px] overflow-hidden">${l}</div>`).join('')}
    <div class="absolute top-0 inset-x-0 h-2 bg-linear-to-b from-black/40 to-transparent"></div>`;
</script>
</body>
</html>
